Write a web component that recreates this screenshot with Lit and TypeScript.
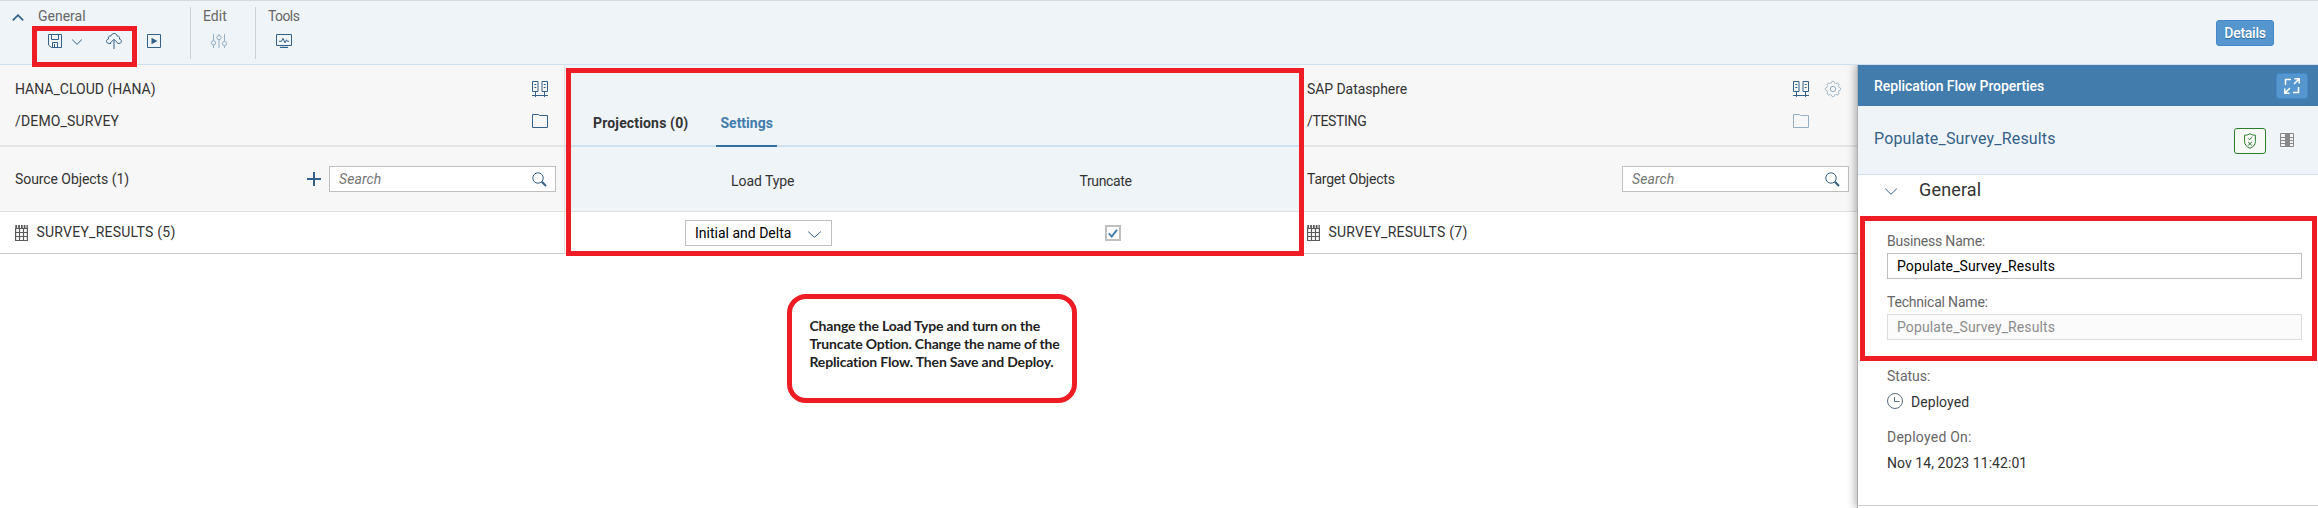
import { LitElement, html, css, svg } from "lit";
import { customElement } from "lit/decorators.js";

const icon = (w: number, h: number, body: unknown, cls = "") =>
  html`<svg class="ic ${cls}" width=${w} height=${h} viewBox="0 0 ${w} ${h}">${body}</svg>`;

// Outline of a cog with eight rounded teeth.
const cog = Array.from({ length: 96 }, (_, i) => {
  const a = (i / 96) * Math.PI * 2;
  const r = 6.9 + 0.75 * Math.tanh(2.5 * Math.cos(8 * a));
  return `${(8 + r * Math.cos(a)).toFixed(2)} ${(8 + r * Math.sin(a)).toFixed(2)}`;
}).join("L");

const chevUp = icon(12, 7, svg`<path stroke-width="1.700" d="M.8 6.400 6 1.200 11.200 6.400"/>`);
const chevDown = (w: number, h: number) =>
  icon(w, h, svg`<path d=${`M.2 .6 ${w / 2} ${h - 0.7} ${w - 0.2} .6`}/>`);
const save = icon(14, 14, svg`<path d="M.5.5h13v13h-10l-3-2.500zM3.500.5v5h7v-5M4.500 13.500v-5h5v5M6.500 10v3.500"/>`);
const deploy = icon(16, 16, svg`<path d="M5 10.500H3.200C1.600 10.500.5 9.500.5 8.200.5 6.900 1.500 6.100 2.600 6 1.700 4 3 2.600 4.800 3.100 5.300 1.400 6.700.5 8.200.5c1.600 0 2.700.9 3 2.600 2-.3 3 1.200 2.200 2.900 1.200.3 2 1.100 2 2.300 0 1.300-1 2.200-2.500 2.200H11.500M8 16V6.500M4.300 10 8 6.300l3.700 3.700"/>`);
const run = icon(14, 14, svg`<path d="M.5.5h13v13H.5z"/><path class="solid" d="M4.500 3.800 10.500 7l-6 3.200z"/>`);
const sliders = icon(16, 14, svg`<path d="M2.500 0v6.500M2.500 11v3M8 0v1.200M8 6v8M13.500 0v7M13.500 12v2"/><circle cx="2.500" cy="8.800" r="2.100"/><circle cx="8" cy="3.600" r="2.100"/><circle cx="13.500" cy="9.600" r="2.100"/>`, "dim");
const monitor = icon(16, 14, svg`<path d="M.5.5h15v11H.5zM3 7.300h2.500l1.500-3 2 4.500 1.500-3 .8 1.500H13"/><path stroke-width="1.200" d="M4 13.400h8"/>`);
const servers = icon(16, 16, svg`<path d="M.5.5h5.500v10H.5zM10 .5h5.500v10H10zM2.300 3.500h2M2.300 6.500h2M11.700 3.500h2M11.700 6.500h2M3.500 10.500V16M12.500 10.500V16M0 14.500h16"/>`);
const folder = (cls = "") => icon(16, 14, svg`<path d="M.5.500h6l1 1h8v12H.5z"/>`, cls);
const gear = icon(16, 16, svg`<path d=${`M${cog}Z`}/><circle cx="8" cy="8" r="2.700"/>`, "dim");
const lens = icon(15, 15, svg`<circle cx="6" cy="6" r="5.200"/><path stroke-width="2" d="M9.800 9.800 14 14"/>`);
const plus = icon(14, 14, svg`<path stroke-width="2" d="M7 0v14M0 7h14"/>`);
const table = icon(13, 16, svg`<path stroke-width="1.200" d="M.6 3.500h11.800v12H.6zM0 7.500h13M0 11.500h13M4.500 3v13M8.500 3v13"/><path stroke-width="3" stroke-dasharray="1.800 1" d="M.3 1.500h12.500"/>`, "grey");
const expand = icon(16, 16, svg`<path stroke-width="1.500" d="M7 1.500H1.500V7M14.500 9v5.500H9M10.500.8h4.700v4.700M15 1 10 6M.8 10.500v4.700h4.700M1 15l5-5"/>`, "white");
const shield = icon(12, 16, svg`<path d="M6 .7C4.600 1.800 2.600 2.200.6 2.200v6.300c0 3.200 2.100 5.200 5.400 6.800 3.300-1.600 5.400-3.600 5.400-6.800V2.200C9.400 2.200 7.400 1.800 6 .7zM4 5.200l1.500 1.500L8.400 4M4.200 9l3.600 3.400M7.800 9l-3.600 3.400"/>`, "green");
const columns = icon(14, 14, svg`<path d="M.5.5h13v13H.5zM0 4.500h14M0 7.500h14M0 10.500h14"/><path class="solid" d="M5 0h5v14h-5z"/>`, "grey light");
const clock = icon(16, 16, svg`<circle cx="8" cy="8" r="7.500"/><path d="M7.500 4v4.500h5"/>`, "slate");
const tick = icon(10, 9, svg`<path stroke-width="1.900" d="M.8 4.400 3.700 7.600 9 .8"/>`, "tick");

@customElement("app-root")
export class AppRoot extends LitElement {
  static styles = css`
    :host { display: block; position: relative; height: 508px; overflow: hidden; background: #fff;
      font: 14px/20px Roboto, sans-serif; color: #333; }
    * { box-sizing: border-box; }
    .ic { display: block; flex: none; fill: none; stroke: #346187; stroke-width: 1; overflow: visible; }
    .ic .solid { fill: #346187; stroke: none; }
    .ic.dim { stroke: #94aec4; }
    .ic.grey { stroke: #5a5a5a; }
    .ic.light { stroke: #888; }
    .ic.light .solid { fill: #888; }
    .ic.white { stroke: #fff; }
    .ic.green { stroke: #2b7d2b; }
    .ic.slate { stroke: #5c6f82; }
    .ic.tick { stroke: #427cac; }
    .row { display: flex; align-items: center; }
    .grow { flex: 1; }
    span { white-space: nowrap; }

    .toolbar { height: 65px; background: #eff4f9; border-top: 1px solid #d9d9d9; border-bottom: 1px solid #cfe0f0;
      display: flex; align-items: flex-start; color: #666; }
    .collapse { width: 38px; padding: 13px 0 0 12px; }
    .group { height: 52px; margin-top: 6px; padding-left: 12px; border-left: 1px solid #ccd0d4; }
    .group.first { width: 152px; padding-left: 0; border: 0; }
    .group.edit { width: 65px; }
    .group span { display: block; line-height: 18px; }
    .tools { height: 16px; margin-top: 8px; padding-left: 8px; }
    .first .tools { padding-left: 10px; }
    .first .tools svg:nth-child(2) { margin: 1px 24px 0 10px; }
    .first .tools svg:nth-child(4) { margin-left: 25px; }
    .details { margin: 19px 44px 0 0; width: 58px; height: 26px; background: #5496cd; border: 1px solid #4389c9;
      border-radius: 3px; color: #fff; font-weight: 500; line-height: 25px; text-align: center; text-shadow: 0 1px 1px #2d6a9f; letter-spacing: -.25px; }

    .body { display: flex; height: 443px; align-items: flex-start; }
    .col { background: #f7f7f7; flex: none; }
    .source { width: 565px; border-right: 1px solid #e0e0e0; }
    .middle { width: 734px; background: #eff4f9; }
    .target { width: 558px; }
    .conn { height: 80px; padding: 14px 16px 0 15px; }
    .conn .row { height: 20px; margin-bottom: 12px; }
    .target .conn, .target .objects, .target .item { padding-left: 8px; }
    .folder-gap { width: 32px; }
    .gear { margin-left: 16px; display: flex; }
    .objects { height: 67px; border-top: 2px solid #e5e5e5; border-bottom: 1px solid #e0e0e0; padding: 0 8px 0 15px; }
    .search { width: 227px; height: 26px; margin-left: 8px; border: 1px solid #bfbfbf; background: #fff; padding: 0 8px 0 9px;
      font-style: italic; color: #757575; letter-spacing: .1px; }
    .item { height: 42px; background: #fff; border-bottom: 1px solid #ccc; padding-left: 15px; }
    .item span { margin: -1px 0 0 8.500px; }

    .tabs { height: 82px; padding: 48px 0 0 28px; border-bottom: 2px solid #cfe0f0; display: flex; font-weight: 700; }
    .tab { height: 34px; margin-right: 28px; line-height: 21px; }
    .tab.on { padding: 0 4px; margin-right: 0; color: #427cac; border-bottom: 2px solid #346f9f; }
    .heads { height: 65px; border-bottom: 1px solid #e0e0e0; padding: 4px 0 0 166px; }
    .heads span:last-child { margin-left: 285px; }
    .middle .item { padding: 1px 0 0 120px; }
    .select { width: 147px; height: 26px; border: 1px solid #bfbfbf; color: #000; padding: 0 10px 0 9px; justify-content: space-between; }
    .select span { margin: 0; }
    .select svg { margin-top: 2px; }
    .check { width: 16px; height: 16px; margin-left: 273px; border: 2px solid #bfbfbf; display: grid; place-items: center; }

    .panel { flex: none; width: 461px; height: 443px; background: #fff; border-left: 1px solid #b0b0b0;
      box-shadow: -2px 0 8px rgba(0,0,0,.3); clip-path: inset(0 0 0 -20px); }
    .phead { height: 41px; background: #427cac; color: #fff; font-weight: 500; padding: 0 10px 0 16px; }
    .max { width: 32px; height: 26px; background: #5496cd; border: 1px solid #4389c9; border-radius: 3px; display: grid; place-items: center; }
    .ptitle { height: 69px; background: #eff4f9; border-bottom: 1px solid #cfe0f0; padding: 0 24px 3px 16px; font-size: 16px; color: #346187; }
    .ptitle svg { margin-top: 2px; }
    .valid svg { margin: 0; }
    .valid { width: 32px; height: 26px; margin: 5px 14px 0 0; border: 1px solid #2b7d2b; border-radius: 3px; background: #f7f9f7; display: grid; place-items: center; }
    .section { height: 32px; padding-left: 27px; font-size: 18px; }
    .section span { margin: -3px 0 0 22px; }
    .form { height: 299px; border-bottom: 1px solid #ccc; padding: 24px 16px 0 29px; display: flex; flex-direction: column; }
    .form label { color: #666; line-height: 20px; height: 22px; }
    .input { width: 415px; height: 26px; border: 1px solid #bfbfbf; padding: 0 9px; line-height: 25px; color: #000; margin-bottom: 13px; }
    .input.off { border-color: #dcdcdc; background: #fbfbfb; color: #8c8c8c; margin-bottom: 26px; }
    .value { height: 26px; margin-bottom: 13px; padding-top: 1px; letter-spacing: .06px; }
    .value svg { margin-top: -2px; }
    .value span { margin-left: 8px; }

    .mark { position: absolute; border: 5px solid #ee1c24; }
    .m1 { left: 32px; top: 26px; width: 105px; height: 41px; }
    .m2 { left: 566px; top: 68px; width: 738px; height: 188px; }
    .m3 { left: 1860px; top: 216px; width: 457px; height: 145px; }
    .note { left: 787px; top: 294px; width: 290px; height: 109px; border-radius: 19px; padding: 18px 0 0 17.500px;
      font: 700 14px/18px Lato, sans-serif; color: #222; letter-spacing: -.17px; }
    .note span { display: block; }

    .n1 { letter-spacing: -.07px; } .n2 { letter-spacing: -.2px; } .n3 { letter-spacing: -.33px; } .n6 { letter-spacing: -.6px; }
    .p1 { letter-spacing: .1px; } .p2 { letter-spacing: .16px; } .p3 { letter-spacing: .24px; }
  `;

  render() {
    return html`
      <div class="toolbar">
        <div class="collapse">${chevUp}</div>
        <div class="group first"><span>General</span>
          <div class="tools row">${save}${chevDown(10, 6)}${deploy}${run}</div></div>
        <div class="group edit"><span>Edit</span><div class="tools row">${sliders}</div></div>
        <div class="group"><span class="n6">Tools</span><div class="tools row">${monitor}</div></div>
        <div class="grow"></div>
        <div class="details">Details</div>
      </div>
      <div class="body">
        <div class="col source">
          <div class="conn">
            <div class="row"><span>HANA_CLOUD (HANA)</span><i class="grow"></i>${servers}</div>
            <div class="row"><span class="p2">/DEMO_SURVEY</span><i class="grow"></i>${folder()}</div>
          </div>
          <div class="objects row"><span class="n1">Source Objects (1)</span><i class="grow"></i>${plus}
            <div class="search row"><span>Search</span><i class="grow"></i>${lens}</div></div>
          <div class="item row">${table}<span class="p3">SURVEY_RESULTS (5)</span></div>
        </div>
        <div class="col middle">
          <div class="tabs"><div class="tab p2">Projections (0)</div><div class="tab on">Settings</div></div>
          <div class="heads row"><span class="n1">Load Type</span><span class="n3">Truncate</span></div>
          <div class="item row">
            <div class="select row"><span>Initial and Delta</span>${chevDown(13, 7)}</div>
            <div class="check">${tick}</div>
          </div>
        </div>
        <div class="col target">
          <div class="conn">
            <div class="row"><span class="n1">SAP Datasphere</span><i class="grow"></i>${servers}<div class="gear">${gear}</div></div>
            <div class="row"><span class="n3">/TESTING</span><i class="grow"></i>${folder("dim")}<i class="folder-gap"></i></div>
          </div>
          <div class="objects row"><span class="n2">Target Objects</span><i class="grow"></i>
            <div class="search row"><span>Search</span><i class="grow"></i>${lens}</div></div>
          <div class="item row">${table}<span class="p3">SURVEY_RESULTS (7)</span></div>
        </div>
        <div class="panel">
          <div class="phead row"><span class="n1">Replication Flow Properties</span><i class="grow"></i><div class="max">${expand}</div></div>
          <div class="ptitle row"><span class="p2">Populate_Survey_Results</span><i class="grow"></i><div class="valid">${shield}</div>${columns}</div>
          <div class="section row">${chevDown(12, 7)}<span class="p2">General</span></div>
          <div class="form">
            <label class="n2">Business Name:</label><div class="input p1">Populate_Survey_Results</div>
            <label class="n2">Technical Name:</label><div class="input off p1">Populate_Survey_Results</div>
            <label>Status:</label><div class="value row">${clock}<span>Deployed</span></div>
            <label class="p3">Deployed On:</label><div class="value row">Nov 14, 2023 11:42:01</div>
          </div>
        </div>
      </div>
      <div class="mark m1"></div>
      <div class="mark m2"></div>
      <div class="mark m3"></div>
      <div class="mark note"><span>Change the Load Type and turn on the</span><span>Truncate Option. Change the name of the</span><span>Replication Flow. Then Save and Deploy.</span></div>
    `;
  }
}
